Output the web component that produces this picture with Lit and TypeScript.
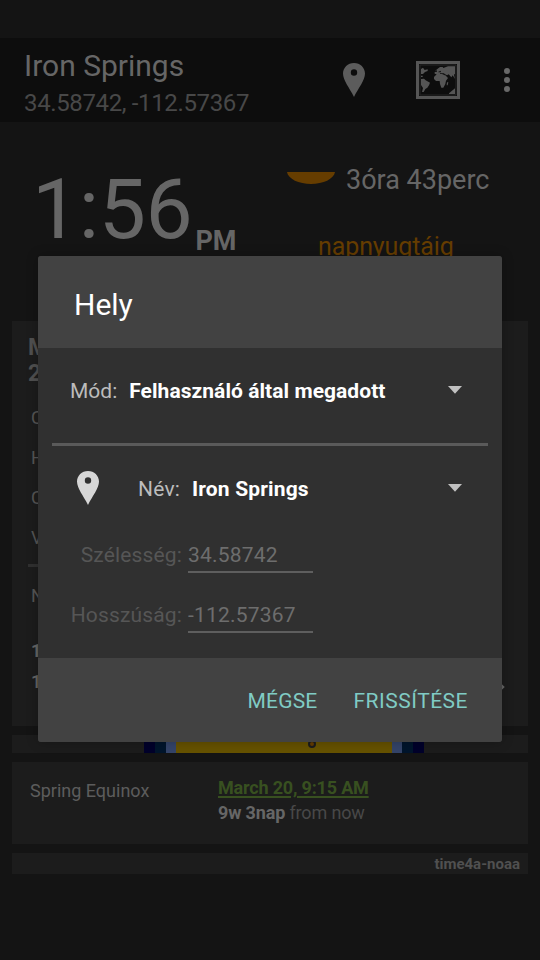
import { LitElement, html, css, svg } from "lit";
import { customElement, property } from "lit/decorators.js";

const pin = svg`<path fill-rule="evenodd" d="M11 0C4.8 0 0 4.7 0 10.6C0 17.500 6.500 25 11 34C15.500 25 22 17.500 22 10.600C22 4.700 17.200 0 11 0ZM11 6.300a3.200 3.200 0 1 1 0 6.400a3.200 3.200 0 0 1 0-6.400Z"/>`;

@customElement("location-dialog")
export class LocationDialog extends LitElement {
  @property() name = "Iron Springs";
  @property() lat = "34.58742";
  @property() lon = "-112.57367";

  static styles = css`
    :host {
      display: flex;
      flex-direction: column;
      width: 464px;
      height: 486px;
      box-sizing: border-box;
      border-radius: 3px;
      overflow: hidden;
      background: #303030;
      color: #bcbcbc;
      font: 21px/30px Roboto, sans-serif;
      white-space: nowrap;
      box-shadow: 0 0 12px rgba(0, 0, 0, 0.25);
    }
    .head {
      height: 92px;
      box-sizing: border-box;
      padding: 28px 36px 0;
      background: #424242;
      color: #fff;
      font-size: 30px;
      line-height: 42px;
    }
    .row {
      display: flex;
      align-items: center;
    }
    .mode {
      height: 86px;
      padding: 0 40px 0 32px;
    }
    .value {
      flex: 1;
      margin-left: 12px;
      color: #fff;
      font-weight: 700;
    }
    .mode .value {
      letter-spacing: 0.05px;
    }
    .place .value {
      letter-spacing: 0.15px;
    }
    .arrow {
      width: 14px;
      height: 8px;
      fill: #c1c1c1;
      margin-top: -2px;
    }
    .rule {
      height: 3px;
      margin: 9px 14px 0;
      background: #5a5a5a;
      flex: none;
    }
    .place {
      height: 86px;
      padding: 0 40px 0 39px;
    }
    .place .name {
      letter-spacing: 0.2px;
    }
    .pin {
      width: 22px;
      height: 34px;
      fill: #d6d6d6;
      margin: -2px 39px 0 0;
    }
    .field {
      height: 60px;
      align-items: flex-start;
      padding-left: 14px;
      color: #565656;
      margin-top: 8px;
      margin-bottom: -8px;
    }
    .field .label {
      width: 130px;
      text-align: right;
      letter-spacing: 0.15px;
    }
    .field .input {
      width: 125px;
      height: 31px;
      margin-left: 6px;
      border-bottom: 2px solid #5e5e5e;
      color: #6d6d6d;
      letter-spacing: 0.2px;
    }
    .actions {
      display: flex;
      justify-content: flex-end;
      gap: 36px;
      margin-top: auto;
      height: 84px;
      box-sizing: border-box;
      padding: 28px 34px 0;
      background: #424242;
      color: #80cbc4;
    }
    .cancel {
      letter-spacing: 0.2px;
    }
    .ok {
      letter-spacing: 0.5px;
    }
  `;

  private arrow() {
    return html`<svg class="arrow" viewBox="0 0 14 8"><path d="M0 0H14L7 7.700Z" /></svg>`;
  }

  private field(label: string, value: string) {
    return html`<div class="row field"><span class="label">${label}</span><span class="input">${value}</span></div>`;
  }

  render() {
    return html`
      <div class="head">Hely</div>
      <div class="row mode"><span>Mód:</span><span class="value">Felhasználó által megadott</span>${this.arrow()}</div>
      <div class="rule"></div>
      <div class="row place">
        <svg class="pin" viewBox="0 0 22 34">${pin}</svg>
        <span class="name">Név:</span><span class="value">${this.name}</span>${this.arrow()}
      </div>
      ${this.field("Szélesség:", this.lat)} ${this.field("Hosszúság:", this.lon)}
      <div class="actions"><span class="cancel">MÉGSE</span><span class="ok">FRISSÍTÉSE</span></div>
    `;
  }
}

@customElement("app-root")
export class AppRoot extends LitElement {
  static styles = css`
    :host {
      display: flex;
      flex-direction: column;
      position: relative;
      width: 540px;
      height: 960px;
      box-sizing: border-box;
      overflow: hidden;
      background: #141414;
      color: #666;
      font: 18px/24px Roboto, sans-serif;
      white-space: nowrap;
    }
    .bar {
      display: flex;
      align-items: center;
      margin-top: 38px;
      height: 84px;
      box-sizing: border-box;
      padding: 0 30px 0 24px;
      background: #0d0d0d;
      flex: none;
    }
    .titles {
      flex: 1;
      padding-top: 7px;
    }
    .title {
      font-size: 30px;
      line-height: 38px;
    }
    .coords {
      font-size: 24px;
      line-height: 36px;
      letter-spacing: -0.36px;
      color: #484848;
    }
    .pin {
      width: 22px;
      height: 34px;
      fill: #5c5c5c;
      margin-right: 51px;
    }
    .map {
      width: 44px;
      height: 38px;
      margin-right: 44px;
    }
    .more {
      width: 6px;
      height: 24px;
      fill: #686868;
    }
    .hero {
      display: flex;
      height: 199px;
      flex: none;
    }
    .clock {
      display: flex;
      align-items: baseline;
      width: 287px;
      box-sizing: border-box;
      padding: 38px 0 0 32px;
    }
    .time {
      font-size: 84px;
      line-height: 100px;
      letter-spacing: -0.4px;
    }
    .ampm {
      font-size: 27px;
      font-weight: 700;
      position: relative;
      top: 12px;
      margin-left: 3px;
    }
    .remaining {
      display: flex;
      flex-direction: column;
      padding-top: 42px;
    }
    .until {
      display: flex;
      gap: 11px;
      font-size: 27px;
      line-height: 32px;
    }
    .sun {
      width: 48px;
      height: 12px;
      margin-top: 8px;
      fill: #663d00;
    }
    .event {
      margin: 35px 0 0 31px;
      font-size: 25px;
      line-height: 32px;
      letter-spacing: -0.1px;
      color: #663d00;
    }
    .card {
      margin: 0 12px 9px;
      background: #1c1c1c;
      box-sizing: border-box;
      flex: none;
    }
    .times {
      height: 405px;
      padding: 14px 0 0 16px;
      display: flex;
      justify-content: space-between;
    }
    .date {
      font-size: 23px;
      line-height: 26px;
      font-weight: 700;
      color: #505050;
    }
    .list {
      padding: 11px 0 0 3px;
      line-height: 40px;
      color: #555;
    }
    .sep {
      width: 470px;
      height: 3px;
      margin-top: 6px;
      background: #303030;
    }
    .next {
      padding: 9px 0 0 3px;
      line-height: 40px;
      color: #555;
    }
    .days {
      padding: 19px 0 0 3px;
      line-height: 31px;
      color: #666;
    }
    .days .b {
      font-weight: 700;
    }
    .days .m {
      font-weight: 500;
    }
    .chev {
      width: 8px;
      height: 12px;
      margin: 346px 23px 0 0;
      fill: none;
      stroke: #666;
      stroke-width: 2.400;
    }
    .track {
      height: 18px;
      display: flex;
      padding-left: 132px;
    }
    .night {
      width: 11px;
      background: #00002a;
    }
    .dusk {
      width: 11px;
      background: #00152c;
    }
    .civil {
      width: 10px;
      background: #344469;
    }
    .day {
      width: 216px;
      background: #665200;
      display: flex;
      padding-left: 132px;
      box-sizing: border-box;
    }
    .now {
      width: 8px;
      height: 8px;
      margin-top: 5px;
      box-sizing: border-box;
      border: 2px solid #1c1c1c;
      border-radius: 50%;
      background: #663d00;
    }
    .season {
      height: 82px;
      display: flex;
      padding: 13px 0 0 18px;
    }
    .name {
      width: 188px;
      padding-top: 4px;
      color: #5c5c5c;
    }
    .link {
      color: #385020;
      font-weight: 700;
      text-decoration: underline;
      text-decoration-thickness: 2px;
      text-underline-offset: 2px;
      line-height: 25px;
      letter-spacing: -0.18px;
    }
    .ago {
      color: #484848;
      line-height: 25px;
      letter-spacing: -0.15px;
    }
    .ago b {
      color: #666;
    }
    .source {
      height: 21px;
      padding-right: 8px;
      text-align: right;
      font-size: 15px;
      line-height: 22px;
      font-weight: 700;
      color: #505050;
    }
    location-dialog {
      position: absolute;
      left: 38px;
      top: 256px;
    }
  `;

  render() {
    return html`
      <header class="bar">
        <div class="titles">
          <div class="title">Iron Springs</div>
          <div class="coords">34.58742, -112.57367</div>
        </div>
        <svg class="pin" viewBox="0 0 22 34">${pin}</svg>
        <svg class="map" viewBox="0 0 132 114">
          <path d="M4.500 4.500H127.500V109.500H4.500Z" fill="none" stroke="#555" stroke-width="9" />
          <path d="M12 12H120V102H12Z" fill="none" stroke="#262626" stroke-width="3" />
          <path
            fill="#555"
            d="M15 24L21 20L26 27L35 25V30L27 33L21 39H15ZM15 44H20V48H15ZM15 54L24 53L29 58L42 65L39 73L34 80L28 84L23 93H18L21 81L15 72ZM57 30L64 24L72 18H80L82 21L96 16H117V38L114 41L117 54L110 43L106 49L98 40L93 43L86 39L78 41L88 43L96 51L90 59L88 69L82 80H76L72 69L71 60H60L54 54V48L62 40L56 38V33L63 32V28ZM93 64H97L95 73H92ZM99 97L117 82V99H99Z"
          />
          <path fill="#0d0d0d" d="M67 32L75 29L74 34H67ZM72 37H85V39H72Z" />
        </svg>
        <svg class="more" viewBox="0 0 6 24"><circle cx="3" cy="3" r="3" /><circle cx="3" cy="12" r="3" /><circle cx="3" cy="21" r="3" /></svg>
      </header>
      <section class="hero">
        <div class="clock"><span class="time">1:56</span><span class="ampm">PM</span></div>
        <div class="remaining">
          <div class="until">
            <svg class="sun" viewBox="0 0 48 12"><path d="M0 0H48C47 7 36 12 24 12S1 7 0 0Z" /></svg>
            <span>3óra 43perc</span>
          </div>
          <div class="event">napnyugtáig</div>
        </div>
      </section>
      <section class="card times">
        <div>
          <div class="date">M<br />2</div>
          <div class="list">C<br />H<br />C<br />V</div>
          <div class="sep"></div>
          <div class="next">N</div>
          <div class="days"><div class="b">1</div><div class="m">1</div></div>
        </div>
        <svg class="chev" viewBox="0 0 8 12"><path d="M1 1L6 6L1 11" /></svg>
      </section>
      <section class="card track">
        <div class="night"></div>
        <div class="dusk"></div>
        <div class="civil"></div>
        <div class="day"><div class="now"></div></div>
        <div class="civil"></div>
        <div class="dusk"></div>
        <div class="night"></div>
      </section>
      <section class="card season">
        <div class="name">Spring Equinox</div>
        <div>
          <div class="link">March 20, 9:15 AM</div>
          <div class="ago"><b>9w 3nap</b> from now</div>
        </div>
      </section>
      <footer class="card source">time4a-noaa</footer>
      <location-dialog></location-dialog>
    `;
  }
}
